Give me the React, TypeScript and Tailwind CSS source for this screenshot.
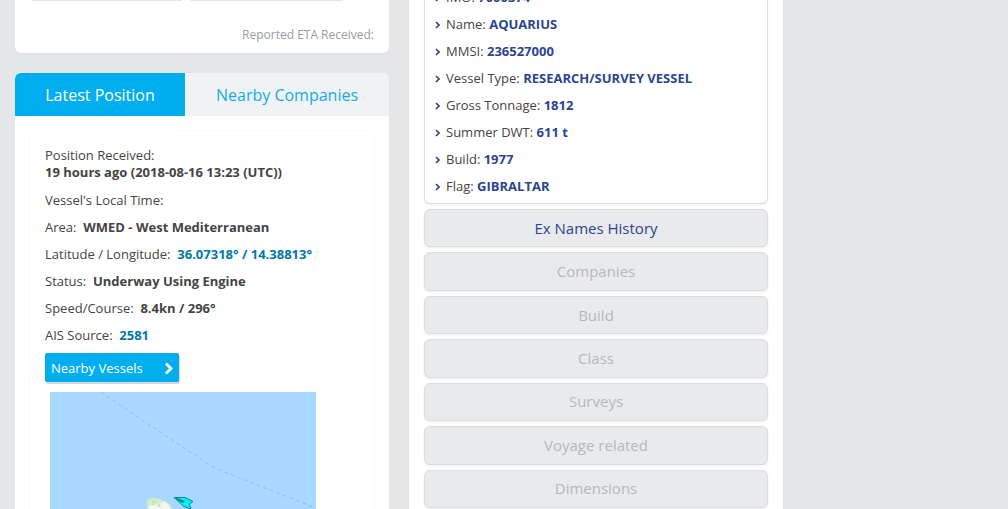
import React from 'react';

const particulars = [
    { label: 'IMO', value: '7000374' },
    { label: 'Name', value: 'AQUARIUS' },
    { label: 'MMSI', value: '236527000' },
    { label: 'Vessel Type', value: 'RESEARCH/SURVEY VESSEL' },
    { label: 'Gross Tonnage', value: '1812' },
    { label: 'Summer DWT', value: '611 t' },
    { label: 'Build', value: '1977' },
    { label: 'Flag', value: 'GIBRALTAR' },
];

const sections = ['Companies', 'Build', 'Class', 'Surveys', 'Voyage related', 'Dimensions'];

const positionRows = [
    { label: 'Area', value: 'WMED - West Mediterranean' },
    { label: 'Latitude / Longitude', value: '36.07318° / 14.38813°', link: true },
    { label: 'Status', value: 'Underway Using Engine' },
    { label: 'Speed/Course', value: '8.4kn / 296°' },
    { label: 'AIS Source', value: '2581', link: true },
];

const sectionButton =
    'min-h-9 w-full flex-1 rounded-md border border-[#dcdddd] bg-[#e9eaeb] text-[15px] shadow-[0_1px_3px_rgba(0,0,0,0.08)]';

const PositionMap = () => (
    <svg
        className="ml-[5px] min-h-[117px] w-[266px] flex-1 bg-[#a8d8ff]"
        viewBox="0 0 266 117"
        preserveAspectRatio="xMidYMin slice"
        aria-label="Map of the latest position"
    >
        <path d="M51 0L95 30L163 75L167 77L266 116" fill="none" stroke="#8fbcf0" strokeDasharray="4 3" />
        <path d="M97 117v-8l2-2 5-1 6 1 3 2 4 1 3 3 3 4z" fill="#d3ecc8" />
        <path d="M99 117l1-4 4 1 3-2 5-1 2-2 4 3 3 5z" fill="#f4f7ee" />
        <path d="M102 109l3-1 1 2-3 1zM107 113l3-1 1 2-3 1z" fill="#bfe2b2" />
        <path d="M124 105.5L135 105.5L143 109.5L139.5 112L141 117L134 114.5Z" fill="#00f3f6" stroke="#11808f" strokeWidth="1" />
        <path d="M124 105l7 2.5 4 1.5-2 2-4-2z" fill="#11808f" />
    </svg>
);

const LatestPosition = () => (
    <section className="flex flex-1 flex-col rounded-t-md bg-white shadow-[0_1px_2px_rgba(0,0,0,0.04)]">
        <div className="flex h-[43px] text-base" role="tablist">
            <button role="tab" aria-selected="true" className="w-[170px] rounded-tl-md bg-[#00aeef] text-white">
                Latest Position
            </button>
            <button role="tab" aria-selected="false" className="flex-1 rounded-tr-md bg-[#f1f2f4] text-[#10adeb]">
                Nearby Companies
            </button>
        </div>
        <div className="mx-[14px] mt-[14px] flex flex-1 flex-col rounded-t-md border border-b-0 border-[#fafafa] px-[15px] pt-4">
            <div>Position Received:</div>
            <div className="mb-[11px] font-bold">19 hours ago (2018-08-16 13:23 (UTC))</div>
            <div className="mb-[9px] flex flex-col gap-[10px]">
                <div>Vessel&#39;s Local Time:</div>
                {positionRows.map((row) => (
                    <div key={row.label}>
                        {row.label}:&nbsp;{' '}
                        {row.link ? (
                            <a href="#" className="font-bold text-[#0079a8]">{row.value}</a>
                        ) : (
                            <strong className="font-bold">{row.value}</strong>
                        )}
                    </div>
                ))}
            </div>
            <button className="mb-[10px] flex h-[29px] w-[134px] shrink-0 items-center justify-between rounded-xs bg-[#00aeef] px-[6px] pt-0.5 text-white shadow-[1px_2px_0_#d3d6d8]">
                <span>Nearby Vessels</span>
                <svg width="9" height="13" viewBox="0 0 9 13" aria-hidden="true">
                    <path d="M2 1.5L7 6.5L2 11.5" fill="none" stroke="white" strokeWidth="2.8" />
                </svg>
            </button>
            <PositionMap />
        </div>
    </section>
);

const App = () => {
    return (
        <div className="grid min-h-screen grid-cols-[374fr_374fr_205fr] gap-5 overflow-hidden bg-[#e5e6e8] pl-[15px] font-['Open_Sans',sans-serif] text-[13px] leading-[17px] text-[#444444]">
            <div className="flex min-w-0 flex-col gap-5">
                <section className="rounded-b-md bg-white pb-[10px] shadow-[0_1px_2px_rgba(0,0,0,0.04)]">
                    <div className="flex gap-2 pl-[17px]">
                        <div className="h-px w-[150px] bg-[#e5e6e7]" />
                        <div className="h-px w-[153px] bg-[#e5e6e7]" />
                    </div>
                    <div className="mt-[25px] pr-[15px] text-right text-xs leading-[17px] text-[#95a0a3]">Reported ETA Received:</div>
                </section>
                <LatestPosition />
            </div>
            <main className="flex min-w-0 flex-col bg-white px-[15px] pb-px shadow-[0_1px_2px_rgba(0,0,0,0.04)]">
                <div className="overflow-hidden rounded-b-md border border-t-0 border-[#dcdddd] shadow-[0_1px_3px_rgba(0,0,0,0.06)]">
                    <ul className="-mt-[11px] pb-2">
                        {particulars.map((item) => (
                            <li key={item.label} className="mb-[10px] flex items-center gap-[6px] pl-[10px] last:mb-0">
                                <svg width="5" height="8" viewBox="0 0 5 8" aria-hidden="true">
                                    <path d="M1 1L4 4L1 7" fill="none" stroke="#2b4590" strokeWidth="1.6" />
                                </svg>
                                <span>
                                    {item.label}: <strong className="font-bold text-[#2b4590]">{item.value}</strong>
                                </span>
                            </li>
                        ))}
                    </ul>
                </div>
                <div className="mt-[5px] flex flex-1 flex-col gap-[5px]">
                    <button className={`${sectionButton} text-[#2b4590]`}>Ex Names History</button>
                    {sections.map((name) => (
                        <button key={name} disabled className={`${sectionButton} text-[#b4b9c0]`}>
                            {name}
                        </button>
                    ))}
                </div>
            </main>
        </div>
    );
};

export default App;
